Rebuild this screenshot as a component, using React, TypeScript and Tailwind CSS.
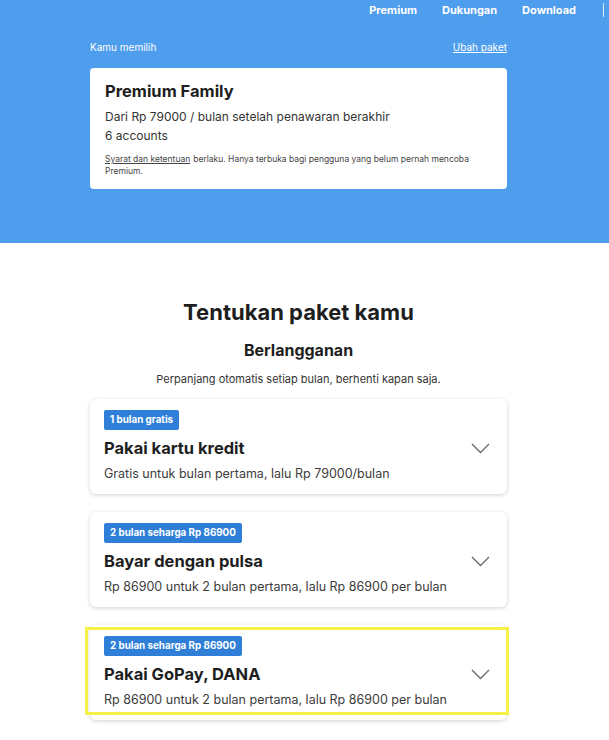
import React from "react";

const Chevron = () => (
  <svg width="19" height="11" viewBox="0 0 19 11" fill="none" className="shrink-0">
    <path d="M1 1l8.5 8.5L18 1" stroke="#6b6b6b" strokeWidth="1.4" />
  </svg>
);

const Option = ({
  badge,
  title,
  desc,
  highlight,
}: {
  badge: string;
  title: string;
  desc: string;
  highlight?: boolean;
}) => (
  <div className="relative rounded-[6px] bg-white px-[14px] pt-[11px] pb-[11px] shadow-[0_1px_4px_rgba(0,0,0,0.18)]">
    <div className="flex">
      <span className="rounded-[2px] bg-[#2f7fd8] px-[6px] py-[4px] text-[9.8px] leading-[12px] font-bold text-white">
        {badge}
      </span>
    </div>
    <div className="mt-[6px] flex items-center justify-between pr-[3px]">
      <div className="text-[16.5px] leading-[24px] font-bold text-[#1e1e1e]">{title}</div>
      <Chevron />
    </div>
    <div className="mt-[5px] text-[12.5px] leading-[18px] text-[#3c3c3c]">{desc}</div>
    {highlight && (
      <div className="pointer-events-none absolute top-[2px] -left-[5px] -right-[2px] bottom-[5px] border-[3.5px] border-[#f7f046]" />
    )}
  </div>
);

export default function App() {
  return (
    <div className="w-[609px] min-h-[740px] bg-white font-['Inter','Noto_Sans',sans-serif]">
      <div className="h-[243px] bg-[#4f9ded] text-white">
        <div className="flex items-center justify-end pt-[2px] pr-[5px]">
          <div className="flex gap-[25px] text-[11px] font-bold leading-[16px]">
            <span>Premium</span>
            <span>Dukungan</span>
            <span>Download</span>
          </div>
          <div className="ml-[27px] h-[14px] w-px bg-white/80" />
        </div>
        <div className="ml-[90px] w-[417px]">
          <div className="mt-[22px] flex items-center justify-between text-[10px] leading-[14px]">
            <span>Kamu memilih</span>
            <span className="underline">Ubah paket</span>
          </div>
          <div className="mt-[14px] rounded-[4px] bg-white px-[15px] pt-[12px] pb-[12px] text-[#1e1e1e]">
            <div className="text-[16.5px] leading-[22px] font-bold">Premium Family</div>
            <div className="mt-[5px] text-[12px] leading-[19px] text-[#333]">
              Dari Rp 79000 / bulan setelah penawaran berakhir
            </div>
            <div className="text-[12px] leading-[19px] text-[#333]">6 accounts</div>
            <div className="mt-[8px] flex flex-col text-[8.5px] leading-[12px] text-[#444]">
              <div className="flex gap-[3px]">
                <span className="underline">Syarat dan ketentuan</span>
                <span>berlaku. Hanya terbuka bagi pengguna yang belum pernah mencoba</span>
              </div>
              <div>Premium.</div>
            </div>
          </div>
        </div>
      </div>
      <div className="ml-[90px] w-[417px]">
        <h1 className="mt-[54px] text-center text-[22px] leading-[30px] font-bold text-[#1e1e1e]">
          Tentukan paket kamu
        </h1>
        <h2 className="mt-[12px] text-center text-[16px] leading-[22px] font-bold text-[#1e1e1e]">
          Berlangganan
        </h2>
        <p className="mt-[11px] text-center text-[11px] leading-[14px] text-[#333]">
          Perpanjang otomatis setiap bulan, berhenti kapan saja.
        </p>
        <div className="mt-[13px] flex flex-col gap-[18px]">
          <Option
            badge="1 bulan gratis"
            title="Pakai kartu kredit"
            desc="Gratis untuk bulan pertama, lalu Rp 79000/bulan"
          />
          <Option
            badge="2 bulan seharga Rp 86900"
            title="Bayar dengan pulsa"
            desc="Rp 86900 untuk 2 bulan pertama, lalu Rp 86900 per bulan"
          />
          <Option
            badge="2 bulan seharga Rp 86900"
            title="Pakai GoPay, DANA"
            desc="Rp 86900 untuk 2 bulan pertama, lalu Rp 86900 per bulan"
            highlight
          />
        </div>
      </div>
    </div>
  );
}
